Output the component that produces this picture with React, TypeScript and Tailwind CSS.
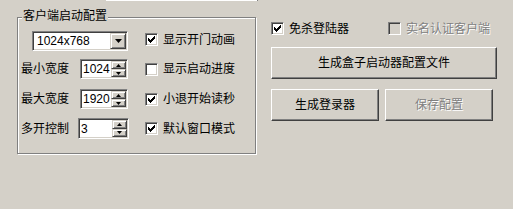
import * as React from "react";

// ---------------------------------------------------------------------------
// Classic 3D pieces
// ---------------------------------------------------------------------------

const sunken =
  "border border-t-[#808080] border-l-[#808080] border-b-white border-r-white shadow-[inset_1px_1px_0_#404040,inset_-1px_-1px_0_#d4d0c8]";
const raised =
  "border border-t-white border-l-white border-b-[#404040] border-r-[#404040] shadow-[inset_-1px_-1px_0_#808080]";
const raisedSmall =
  "border border-t-[#d4d0c8] border-l-[#d4d0c8] border-b-[#404040] border-r-[#404040] shadow-[inset_1px_1px_0_#fff,inset_-1px_-1px_0_#808080]";

const CHECK_COLS = [2, 3, 4, 3, 2, 1, 0];

function CheckMark() {
  return (
    <svg width="7" height="7" viewBox="0 0 7 7" shapeRendering="crispEdges">
      {CHECK_COLS.map((y, x) => (
        <rect key={x} x={x} y={y} width="1" height="3" fill="#000" />
      ))}
    </svg>
  );
}

function Check({
  label,
  checked = false,
  disabled = false,
}: {
  label: string;
  checked?: boolean;
  disabled?: boolean;
}) {
  return (
    <div className="flex items-center">
      <div
        className={`flex h-[13px] w-[13px] items-center justify-center ${sunken} ${
          disabled ? "bg-[#d4d0c8]" : "bg-white"
        }`}
      >
        {checked && <CheckMark />}
      </div>
      <span
        className={`ml-[5px] whitespace-nowrap ${
          disabled ? "text-[#808080] [text-shadow:1px_1px_0_#fff]" : ""
        }`}
      >
        {label}
      </span>
    </div>
  );
}

function Tri({ up = false, w = 7, h = 4 }: { up?: boolean; w?: number; h?: number }) {
  const pts = up ? `0,${h} ${w},${h} ${w / 2},0` : `0,0 ${w},0 ${w / 2},${h}`;
  return (
    <svg width={w} height={h} viewBox={`0 0 ${w} ${h}`}>
      <polygon points={pts} fill="#000" />
    </svg>
  );
}

function Combo({ value }: { value: string }) {
  return (
    <div className={`flex h-[20px] w-[96px] items-stretch bg-white p-[1px] ${sunken}`}>
      <div className="flex flex-1 items-center pl-[3px]">{value}</div>
      <div className={`flex w-[16px] items-center justify-center bg-[#d4d0c8] ${raisedSmall}`}>
        <Tri />
      </div>
    </div>
  );
}

function Spin({ value, width }: { value: string; width: string }) {
  return (
    <div className={`flex h-[20px] items-stretch bg-white p-[1px] ${sunken} ${width}`}>
      <div className="flex flex-1 items-center pl-[1px]">{value}</div>
      <div className="flex w-[15px] flex-col">
        <div className={`flex flex-1 items-center justify-center bg-[#d4d0c8] ${raisedSmall}`}>
          <Tri up w={5} h={3} />
        </div>
        <div className={`flex flex-1 items-center justify-center bg-[#d4d0c8] ${raisedSmall}`}>
          <Tri w={5} h={3} />
        </div>
      </div>
    </div>
  );
}

function Button({
  label,
  width,
  disabled = false,
}: {
  label: string;
  width: string;
  disabled?: boolean;
}) {
  return (
    <div
      className={`flex h-[32px] items-center justify-center bg-[#d4d0c8] ${raised} ${width} ${
        disabled ? "text-[#808080] [text-shadow:1px_1px_0_#fff]" : ""
      }`}
    >
      {label}
    </div>
  );
}

// ---------------------------------------------------------------------------
// Page
// ---------------------------------------------------------------------------

export default function App() {
  return (
    <div className="h-[209px] w-[513px] overflow-hidden bg-[#d4d0c8] font-['Liberation_Sans','Noto_Sans_CJK_SC',sans-serif] text-[12px] leading-none text-black">
      <div className="ml-[106px] h-px w-[151px] bg-white shadow-[1px_0_0_#808080]" />

      <div className="flex items-start">
        {/* Group box */}
        <div className="relative ml-[17px] mt-[16px] h-[137px] w-[239px] border border-[#808080] pt-[13px] shadow-[inset_1px_1px_0_#fff,1px_1px_0_#fff]">
          <span className="absolute -top-[8px] left-[4px] bg-[#d4d0c8] px-[1px]">
            客户端启动配置
          </span>

          <div className="flex h-[20px] items-center">
            <div className="w-[127px] pl-[14px]">
              <Combo value="1024x768" />
            </div>
            <div className="-mt-[3px]">
              <Check label="显示开门动画" checked />
            </div>
          </div>

          <div className="mt-[8px] flex h-[20px] items-center">
            <div className="flex w-[127px] items-center pl-[3px]">
              <span className="w-[59px]">最小宽度</span>
              <Spin value="1024" width="w-[48px]" />
            </div>
            <Check label="显示启动进度" />
          </div>

          <div className="mt-[10px] flex h-[20px] items-center">
            <div className="flex w-[127px] items-center pl-[3px]">
              <span className="w-[59px]">最大宽度</span>
              <Spin value="1920" width="w-[48px]" />
            </div>
            <Check label="小退开始读秒" checked />
          </div>

          <div className="mt-[9px] flex h-[21px] items-center">
            <div className="flex w-[127px] items-center pl-[3px]">
              <span className="w-[57px]">多开控制</span>
              <Spin value="3" width="w-[51px] h-[21px]" />
            </div>
            <Check label="默认窗口模式" checked />
          </div>
        </div>

        {/* Right column */}
        <div className="ml-[15px] mt-[21px] flex flex-col">
          <div className="flex items-center">
            <div className="w-[117px]">
              <Check label="免杀登陆器" checked />
            </div>
            <Check label="实名认证客户端" disabled />
          </div>
          <div className="mt-[12px]">
            <Button label="生成盒子启动器配置文件" width="w-[226px]" />
          </div>
          <div className="mt-[10px] flex gap-[6px]">
            <Button label="生成登录器" width="w-[108px]" />
            <Button label="保存配置" width="w-[108px]" disabled />
          </div>
        </div>
      </div>
    </div>
  );
}
